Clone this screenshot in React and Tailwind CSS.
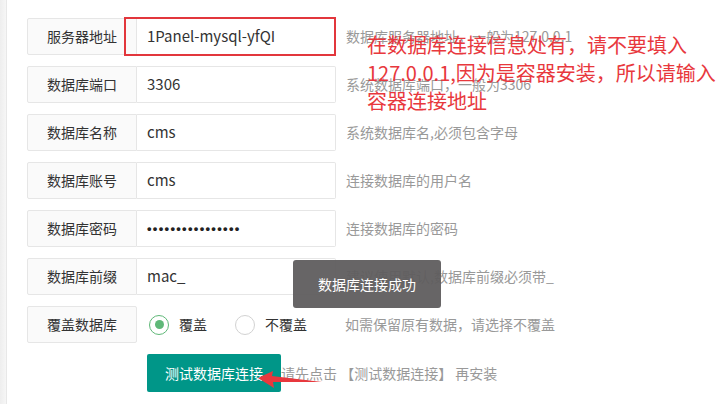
import React from "react";

const font = { fontFamily: '"Noto Sans CJK SC", "Noto Sans", sans-serif' };

function Row({ label, children, hint }) {
  return (
    <div className="flex items-center h-[37px]">
      <div className="w-[110px] h-full flex items-center justify-center bg-[#fafafa] border border-[#e6e6e6] rounded-l-[2px] text-[14px] text-[#333]">
        {label}
      </div>
      {children}
      <div className="ml-[10px] text-[14px] text-[#999] whitespace-nowrap">{hint}</div>
    </div>
  );
}

function Input({ value }) {
  return (
    <div className="w-[199px] h-full flex items-center pl-[10px] bg-white border border-l-0 border-[#e6e6e6] rounded-r-[2px] text-[15px] text-[#333]">
      {value}
    </div>
  );
}

function Radio({ checked, label }) {
  return (
    <div className="flex items-center">
      <div
        className={`w-[20px] h-[20px] rounded-full border-[1.5px] flex items-center justify-center ${
          checked ? "border-[#5fb878]" : "border-[#d2d2d2]"
        }`}
      >
        {checked && <div className="w-[9px] h-[9px] rounded-full bg-[#5fb878]" />}
      </div>
      <span className="ml-[10px] text-[14px] text-[#333]">{label}</span>
    </div>
  );
}

export default function App() {
  return (
    <div className="relative w-[726px] h-[404px] bg-white flex overflow-hidden" style={font}>
      <div className="w-[7px] h-full bg-gradient-to-r from-[#eeeeee] to-[#f6f6f6] border-r border-[#e8e8e8]" />
      <div className="flex flex-col gap-[11px] pl-[20px] pt-[18px]">
        <Row label="服务器地址" hint="数据库服务器地址，一般为127.0.0.1">
          <Input value="1Panel-mysql-yfQI" />
        </Row>
        <Row label="数据库端口" hint="系统数据库端口，一般为3306">
          <Input value="3306" />
        </Row>
        <Row label="数据库名称" hint="系统数据库名,必须包含字母">
          <Input value="cms" />
        </Row>
        <Row label="数据库账号" hint="连接数据库的用户名">
          <Input value="cms" />
        </Row>
        <Row label="数据库密码" hint="连接数据库的密码">
          <div
            className="w-[199px] h-full flex items-center pl-[10px] bg-white border border-l-0 border-[#e6e6e6] rounded-r-[2px] text-[13px] font-bold tracking-[1.3px] text-[#222]"
            style={{ fontFamily: '"Liberation Sans", Arial, sans-serif' }}
          >
            ••••••••••••••••
          </div>
        </Row>
        <Row label="数据库前缀" hint="建议使用默认,数据库前缀必须带_">
          <Input value="mac_" />
        </Row>
        <div className="flex items-center h-[37px]">
          <div className="w-[110px] h-full flex items-center justify-center bg-[#fafafa] border border-[#e6e6e6] rounded-[2px] text-[14px] text-[#333]">
            覆盖数据库
          </div>
          <div className="w-[199px] flex items-center gap-[28px] pl-[12px]">
            <Radio checked label="覆盖" />
            <Radio label="不覆盖" />
          </div>
          <div className="ml-[9px] text-[14px] text-[#999] whitespace-nowrap">如需保留原有数据，请选择不覆盖</div>
        </div>
        <div className="flex items-center pl-[120px]">
          <div className="w-[134px] h-[38px] bg-[#009688] rounded-[2px] text-white text-[14px] flex items-center justify-center">
            测试数据库连接
          </div>
          <div className="text-[14px] text-[#999] whitespace-nowrap">请先点击 【测试数据连接】 再安装</div>
        </div>
      </div>

      {/* red highlight box */}
      <div className="absolute left-[124px] top-[17px] w-[212px] h-[39px] border-2 border-[#e2363c]" />

      {/* red annotation */}
      <div className="absolute left-[367px] top-[31px] text-[20px] leading-[28px] text-[#e8383d] whitespace-nowrap">
        <div>在数据库连接信息处有，请不要填入</div>
        <div>127.0.0.1,因为是容器安装，所以请输入</div>
        <div>容器连接地址</div>
      </div>

      {/* toast */}
      <div className="absolute left-[293px] top-[260px] w-[148px] h-[48px] rounded-[3px] bg-[#5f5d5e]/95 text-white text-[14px] flex items-center justify-center">
        数据库连接成功
      </div>

      {/* red arrow */}
      <svg className="absolute left-[250px] top-[365px]" width="80" height="30" viewBox="0 0 80 30">
        <path d="M8 13 L23 6 L22 11 L72 17 L23 17 L24 23 Z" fill="#e8383d" />
      </svg>
    </div>
  );
}
